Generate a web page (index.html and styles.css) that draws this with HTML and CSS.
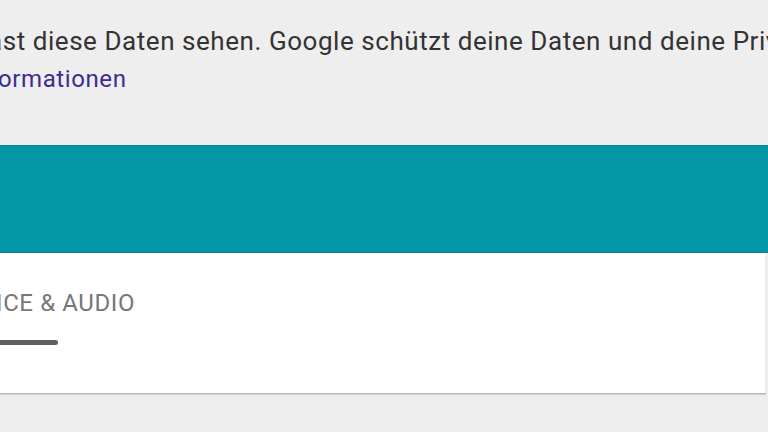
FILE: index.html
```html
<!DOCTYPE html>
<html lang="de">
<head>
<meta charset="utf-8">
<title>Meine Aktivitäten</title>
<link rel="stylesheet" href="styles.css">
</head>
<body>
<main class="page">
  <section class="intro">
    <p class="notice">ast diese Daten sehen. Google schützt deine Daten und deine Privatsphäre.</p>
    <a class="more" href="#">ormationen</a>
  </section>
  <section class="card">
    <header class="card-head"></header>
    <div class="card-body">
      <div class="tab-label">ICE &amp; AUDIO</div>
      <div class="tab-indicator"></div>
    </div>
  </section>
</main>
</body>
</html>
```

FILE: styles.css
```css
html, body {
  margin: 0;
  padding: 0;
}
body {
  background: #eeeeee;
  font-family: Roboto, "Noto Sans", "Liberation Sans", sans-serif;
  overflow: hidden;
  width: 768px;
  height: 432px;
}
.page {
  display: flex;
  flex-direction: column;
}
.intro {
  display: flex;
  flex-direction: column;
  padding: 26px 0 51px;
}
.notice {
  margin: 0 0 0 -12px;
  font-size: 26px;
  line-height: 30px;
  letter-spacing: 0.55px;
  color: #333333;
  white-space: nowrap;
}
.more {
  margin: 8px 0 0 -2px;
  font-size: 24px;
  line-height: 30px;
  letter-spacing: 0.6px;
  color: #3d2c92;
  text-decoration: none;
  white-space: nowrap;
}
.card {
  display: flex;
  flex-direction: column;
}
.card-head {
  height: 106px;
  background: #0396a4;
  border-top: 1px solid #0a8690;
  border-bottom: 1px solid #0a7f88;
}
.card-body {
  height: 140px;
  box-sizing: border-box;
  background: #ffffff;
  margin-right: 2px;
  border-right: 1px solid #eeeeee;
  padding-top: 36px;
  box-shadow: 0 1px 0 #b9b9b9, 0 2px 1px #d2d2d2;
}
.tab-label {
  margin-left: -4px;
  font-size: 24px;
  line-height: 28px;
  letter-spacing: 0.6px;
  color: #777777;
  white-space: nowrap;
}
.tab-indicator {
  margin-top: 23px;
  margin-left: -10px;
  width: 68px;
  height: 5px;
  border-radius: 3px;
  background: #606060;
}
```
